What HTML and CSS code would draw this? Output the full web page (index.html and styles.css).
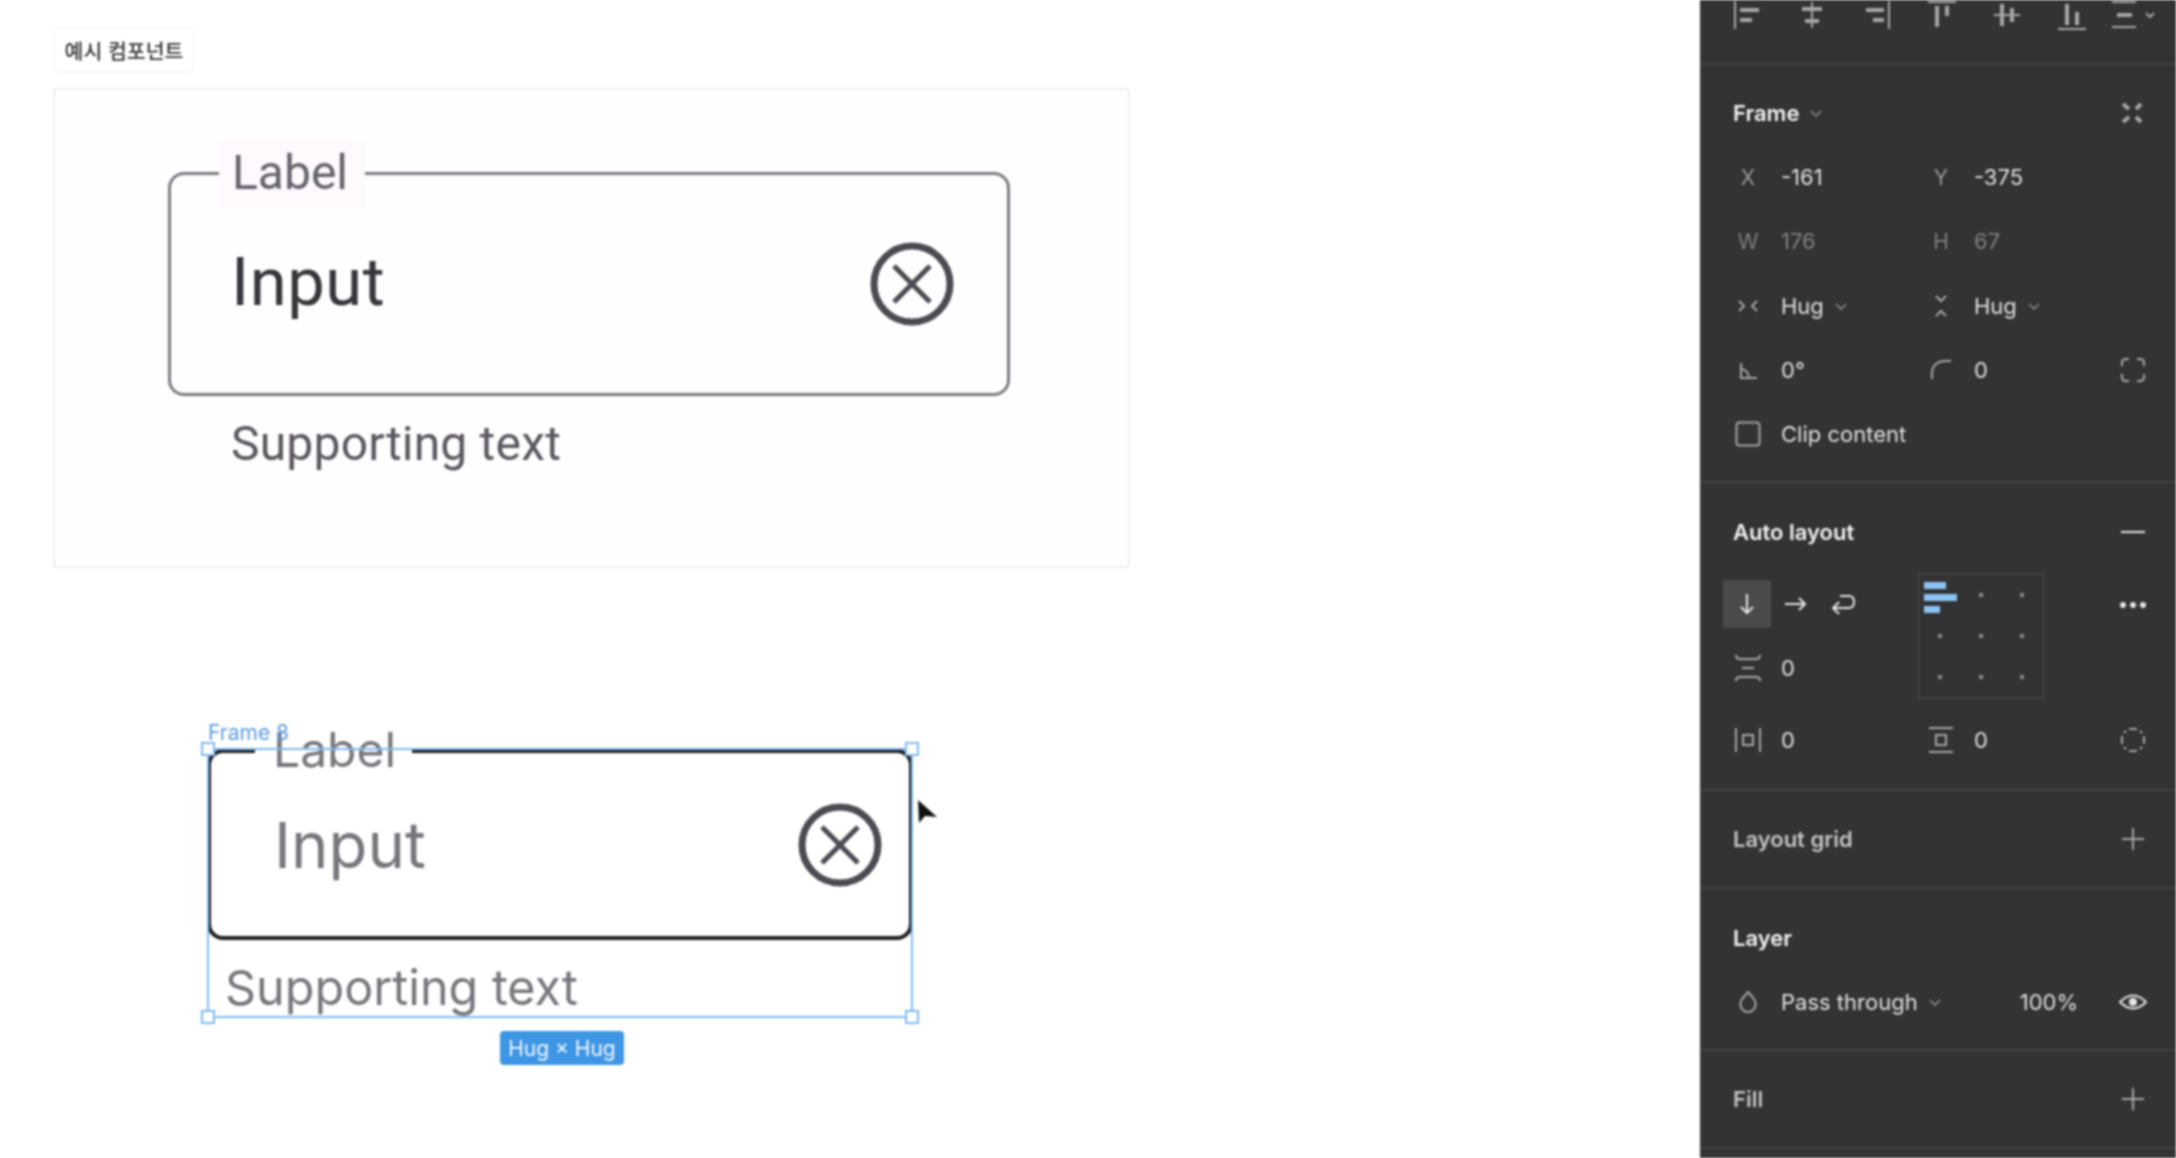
FILE: index.html

```html
<!DOCTYPE html>
<html lang="ko">
<head>
    <meta charset="UTF-8">
    <title>예시 컴포넌트</title>
    <link rel="stylesheet" href="styles.css">
</head>
<body>
<div class="app">
    <!-- canvas: frames sit at their own place on the free canvas -->
    <main class="canvas">
        <div class="tag">예시 컴포넌트</div>
        <div class="card"></div>

        <div class="field field-a">
            <div class="field-box">
                <span class="field-label">Label</span>
                <span class="field-input">Input</span>
                <svg class="clear-icon" viewBox="0 0 84 84"><circle cx="42" cy="42" r="38"/><path d="M24 24 60 60M60 24 24 60"/></svg>
            </div>
            <div class="field-support">Supporting text</div>
        </div>

        <div class="field field-b">
            <div class="field-box">
                <span class="field-label">Label</span>
                <span class="field-input">Input</span>
                <svg class="clear-icon" viewBox="0 0 84 84"><circle cx="42" cy="42" r="38"/><path d="M24 24 60 60M60 24 24 60"/></svg>
            </div>
            <div class="field-support">Supporting text</div>
            <div class="selection">
                <span class="frame-name">Frame 8</span>
                <i class="handle tl"></i><i class="handle tr"></i><i class="handle bl"></i><i class="handle br"></i>
                <span class="hug-badge">Hug × Hug</span>
            </div>
        </div>

        <svg class="cursor" viewBox="0 0 24 28"><path d="M2 1 3 24 9 17 21 18Z"/></svg>
    </main>

    <!-- right panel -->
    <aside class="panel">
        <section class="section align-bar">
            <svg class="ico" viewBox="0 0 30 30"><path d="M3 1V29"/><path class="thick" d="M8 10H27M8 20H20"/></svg>
            <svg class="ico" viewBox="0 0 30 30"><path d="M15 2V28"/><path class="thick" d="M5 9H25M8 21H22"/></svg>
            <svg class="ico" viewBox="0 0 30 30"><path d="M27 1V29"/><path class="thick" d="M4 10H22M11 20H22"/></svg>
            <svg class="ico" viewBox="0 0 30 30"><path d="M1 2H29"/><path class="thick" d="M10 6V27M20 6V16"/></svg>
            <svg class="ico" viewBox="0 0 30 30"><path d="M2 15H28"/><path class="thick" d="M10 4V26M20 8V22"/></svg>
            <svg class="ico" viewBox="0 0 30 30"><path d="M1 29H29"/><path class="thick" d="M10 4V25M20 12V25"/></svg>
            <svg class="ico ico-wide" viewBox="0 0 44 30"><path d="M2 2H26M2 27H26M36 13 40 17 44 13"/><path class="thick" d="M7 15H22"/></svg>
        </section>

        <section class="section section-frame">
            <div class="title-row">
                <span class="title">Frame <svg class="chev" viewBox="0 0 14 14"><path d="M2 4 7 9 12 4"/></svg></span>
                <svg class="ico" viewBox="0 0 30 30"><path class="thick" d="M5 6 11 11M23 6 18 11M5 24 11 19M23 24 18 19"/></svg>
            </div>
            <div class="row">
                <span class="pre">X</span><span class="val">-161</span>
                <span class="pre">Y</span><span class="val">-375</span>
            </div>
            <div class="row dim">
                <span class="pre">W</span><span class="val">176</span>
                <span class="pre">H</span><span class="val">67</span>
            </div>
            <div class="row row-hug">
                <svg class="ico" viewBox="0 0 30 30"><path d="M6 10 11 15 6 20M24 10 19 15 24 20"/></svg>
                <span class="val">Hug <svg class="chev" viewBox="0 0 14 14"><path d="M2 4 7 9 12 4"/></svg></span>
                <svg class="ico" viewBox="0 0 30 30"><path d="M10 5 15 10 20 5M10 25 15 20 20 25"/></svg>
                <span class="val">Hug <svg class="chev" viewBox="0 0 14 14"><path d="M2 4 7 9 12 4"/></svg></span>
            </div>
            <div class="row">
                <svg class="ico" viewBox="0 0 30 30"><path d="M8 8V23H24M8 14C12 14 16 18 16 23"/></svg>
                <span class="val">0°</span>
                <svg class="ico" viewBox="0 0 30 30"><path d="M6 24V18C6 10 12 6 20 6H25"/></svg>
                <span class="val">0</span>
                <svg class="ico" viewBox="0 0 30 30"><path d="M4 11V8Q4 4 8 4H11M19 4H22Q26 4 26 8V11M26 19V22Q26 26 22 26H19M11 26H8Q4 26 4 22V19"/></svg>
            </div>
            <div class="row">
                <svg class="ico" viewBox="0 0 30 30"><rect x="3.5" y="3.5" width="23" height="23" rx="3"/></svg>
                <span class="val val-wide">Clip content</span>
            </div>
        </section>

        <section class="section section-auto">
            <div class="title-row">
                <span class="title">Auto layout</span>
                <svg class="ico ico-bright" viewBox="0 0 30 30"><path d="M3 15H27"/></svg>
            </div>
            <div class="layout-top">
                <div class="layout-left">
                    <div class="dir-row">
                        <span class="dir-btn active"><svg class="ico ico-bright" viewBox="0 0 30 30"><path d="M15 5V24M9 18 15 24 21 18"/></svg></span>
                        <span class="dir-btn"><svg class="ico ico-bright" viewBox="0 0 30 30"><path d="M5 15H25M19 9 25 15 19 21"/></svg></span>
                        <span class="dir-btn"><svg class="ico ico-bright" viewBox="0 0 30 30"><path d="M12 7H21Q26 7 26 13T21 19H5M11 13 5 19 11 25"/></svg></span>
                    </div>
                    <div class="gap-row">
                        <svg class="ico" viewBox="0 0 30 30"><path d="M3 2Q3 6 7 6H23Q27 6 27 2M9 15H21M3 28Q3 24 7 24H23Q27 24 27 28"/></svg>
                        <span class="val">0</span>
                    </div>
                </div>
                <div class="align-grid">
                    <div class="align-cell first"><b class="bar-a"></b><b class="bar-b"></b><b class="bar-c"></b></div>
                    <div class="align-cell"><i></i></div>
                    <div class="align-cell"><i></i></div>
                    <div class="align-cell"><i></i></div>
                    <div class="align-cell"><i></i></div>
                    <div class="align-cell"><i></i></div>
                    <div class="align-cell"><i></i></div>
                    <div class="align-cell"><i></i></div>
                    <div class="align-cell"><i></i></div>
                </div>
                <svg class="ico ico-dots" viewBox="0 0 30 30"><circle cx="5" cy="15" r="3"/><circle cx="15" cy="15" r="3"/><circle cx="25" cy="15" r="3"/></svg>
            </div>
            <div class="row padding-row">
                <svg class="ico" viewBox="0 0 30 30"><path d="M3 3V27M27 3V27M10 10H20V20H10Z"/></svg>
                <span class="val">0</span>
                <svg class="ico" viewBox="0 0 30 30"><path d="M3 3H27M3 27H27M10 10H20V20H10Z"/></svg>
                <span class="val">0</span>
                <svg class="ico" viewBox="0 0 30 30"><path d="M4 11V19M26 11V19M11 4H19M11 26H19M6 8 8 6M22 6 24 8M24 22 22 24M8 24 6 22"/></svg>
            </div>
        </section>

        <section class="section section-plain">
            <span class="title title-dim">Layout grid</span>
            <svg class="ico" viewBox="0 0 30 30"><path d="M15 4V26M4 15H26"/></svg>
        </section>

        <section class="section">
            <div class="title-row"><span class="title">Layer</span></div>
            <div class="row">
                <svg class="ico" viewBox="0 0 30 30"><path d="M15 5 21 12C25 18 21 25 15 25S5 18 9 12Z"/></svg>
                <span class="val val-span">
                    <span>Pass through <svg class="chev" viewBox="0 0 14 14"><path d="M2 4 7 9 12 4"/></svg></span>
                    <span>100%</span>
                </span>
                <svg class="ico ico-bright" viewBox="0 0 30 30"><path d="M2 15Q15 2 28 15 15 28 2 15Z"/><circle class="pupil" cx="15" cy="15" r="4"/></svg>
            </div>
        </section>

        <section class="section section-plain">
            <span class="title title-dim">Fill</span>
            <svg class="ico" viewBox="0 0 30 30"><path d="M15 4V26M4 15H26"/></svg>
        </section>
    </aside>
</div>
</body>
</html>
```

FILE: styles.css

```css
html, body {
    margin: 0;
    height: 100%;
    overflow: hidden;
    background: #fff;
}
.app {
    display: flex;
    width: 2176px;
    height: 1158px;
    font-family: Inter, "Noto Sans CJK KR", sans-serif;
    filter: blur(0.8px);
}

/* canvas */
.canvas {
    position: relative;
    flex: 1;
    background: #fff;
}
.tag {
    position: absolute;
    left: 53px;
    top: 27px;
    width: 142px;
    height: 46px;
    box-sizing: border-box;
    display: flex;
    align-items: center;
    justify-content: center;
    border: 2px solid #f7f7f7;
    border-radius: 8px;
    font-family: "Noto Sans CJK KR", sans-serif;
    font-size: 20.5px;
    font-weight: 500;
    color: #333;
}
.card {
    position: absolute;
    left: 53px;
    top: 88px;
    width: 1077px;
    height: 480px;
    box-sizing: border-box;
    background: #fefefe;
    border: 2px solid #f0f0f0;
    border-radius: 4px;
}
.field {
    position: absolute;
}
.field-box {
    position: relative;
    display: flex;
    align-items: center;
    justify-content: space-between;
    box-sizing: border-box;
    border-radius: 16px;
}
.field-label {
    position: absolute;
    top: 0;
    transform: translateY(-50%);
    line-height: 1;
}
.field-input {
    line-height: 1;
}
.clear-icon {
    width: 84px;
    height: 84px;
    fill: none;
    stroke: #4c4b52;
    stroke-width: 7;
}
.clear-icon path {
    stroke-width: 5;
}

.field-a {
    left: 168px;
    top: 172px;
    width: 842px;
    font-family: Roboto, sans-serif;
}
.field-a .field-box {
    height: 224px;
    padding: 0 53px 0 60px;
    border: 3px solid #7c7a80;
}
.field-a .field-label {
    left: 48px;
    padding: 8px 17px 12px 13px;
    font-size: 48px;
    color: #67636d;
    background: #fdf9fd;
}
.field-a .field-input {
    margin-bottom: 4px;
    font-size: 67px;
    letter-spacing: 0.5px;
    color: #36363b;
}
.field-a .field-support {
    margin-top: 24px;
    padding-left: 63px;
    font-size: 48px;
    line-height: 48px;
    letter-spacing: 0.2px;
    color: #5a575f;
}

.field-b {
    left: 207px;
    top: 749px;
    width: 706px;
    font-family: Inter, sans-serif;
}
.field-b .field-box {
    height: 191px;
    padding: 0 27px 0 63px;
    border: 4px solid #1e1e20;
    background: #fff;
}
.field-b .field-label {
    left: 44px;
    top: -3px;
    padding: 0 16px 0 18px;
    font-size: 48px;
    color: #77767c;
    background: #fff;
}
.field-b .field-input {
    font-size: 63.5px;
    color: #77767c;
}
.field-b .field-support {
    margin-top: 24px;
    padding-left: 18px;
    font-size: 48.5px;
    line-height: 48px;
    color: #77767c;
}

.selection {
    position: absolute;
    left: 0;
    top: -1px;
    width: 706px;
    height: 270px;
    box-sizing: border-box;
    border: 2px solid #7fbaf0;
    pointer-events: none;
}
.frame-name {
    position: absolute;
    left: -1px;
    top: -29px;
    font-size: 21px;
    line-height: 24px;
    color: #5c9ce0;
}
.handle {
    position: absolute;
    width: 14px;
    height: 14px;
    box-sizing: border-box;
    background: #fff;
    border: 2px solid #7fbaf0;
}
.handle.tl { left: -8px; top: -8px; }
.handle.tr { right: -8px; top: -8px; }
.handle.bl { left: -8px; bottom: -8px; }
.handle.br { right: -8px; bottom: -8px; }
.hug-badge {
    position: absolute;
    left: 291px;
    top: 281px;
    width: 124px;
    height: 34px;
    display: flex;
    align-items: center;
    justify-content: center;
    background: #3f96e4;
    border-radius: 4px;
    color: #f2f7fc;
    font-size: 21px;
    white-space: nowrap;
}
.cursor {
    position: absolute;
    left: 916px;
    top: 799px;
    width: 24px;
    height: 28px;
    fill: #111;
}

/* panel */
.panel {
    flex: 0 0 476px;
    background: #333;
    color: #e6e6e6;
    font-size: 22px;
    overflow: hidden;
}
.section {
    box-sizing: border-box;
    padding: 17px 28px 15px 33px;
    border-bottom: 2px solid #434343;
}
.align-bar {
    display: flex;
    height: 65px;
    padding: 0 0 0 32px;
    column-gap: 35px;
}
.section-frame {
    padding-top: 16px;
}
.section-auto {
    padding-bottom: 17px;
}
.section-plain {
    display: flex;
    align-items: center;
    justify-content: space-between;
    height: 98px;
    padding-top: 0;
    padding-bottom: 0;
}
.title-row {
    display: flex;
    align-items: center;
    justify-content: space-between;
    height: 64px;
}
.title {
    font-size: 22px;
    font-weight: 600;
    color: #f2f2f2;
}
.title-dim {
    color: #c4c4c4;
}
.row {
    display: grid;
    grid-template-columns: 30px 127px 30px 126px 30px;
    column-gap: 18px;
    align-items: center;
    height: 64px;
}
.row-hug {
    margin-top: 1px;
}
.pre {
    text-align: center;
    font-size: 21px;
    color: #999;
}
.val {
    white-space: nowrap;
    color: #e0e0e0;
}
.dim .pre, .dim .val {
    color: #808080;
}
.val-wide {
    grid-column: 2 / 5;
}
.val-span {
    grid-column: 2 / 5;
    display: flex;
    justify-content: space-between;
    padding-right: 22px;
}
.val-span + .ico {
    grid-column: 5;
}
.ico {
    display: block;
    width: 30px;
    height: 30px;
    flex-shrink: 0;
    fill: none;
    stroke: #a6a6a6;
    stroke-width: 2;
}
.ico .thick {
    stroke-width: 4;
}
.ico-bright {
    stroke: #e6e6e6;
}
.ico-wide {
    width: 44px;
    margin-left: -12px;
}
.ico-dots {
    fill: #e6e6e6;
    stroke: none;
    margin-left: auto;
    align-self: flex-start;
    margin-top: 17px;
}
.pupil {
    fill: #e6e6e6;
    stroke: none;
}
.chev {
    display: inline-block;
    width: 14px;
    height: 14px;
    margin-left: 4px;
    fill: none;
    stroke: #888;
    stroke-width: 1.6;
}

/* auto layout */
.layout-top {
    display: flex;
    margin-top: 9px;
}
.layout-left {
    width: 185px;
}
.dir-row {
    display: flex;
    height: 62px;
    align-items: center;
    margin-left: -10px;
}
.dir-btn {
    display: flex;
    align-items: center;
    justify-content: center;
    width: 48px;
    height: 48px;
    border-radius: 3px;
}
.dir-btn.active {
    background: #4b4b4b;
}
.gap-row {
    display: flex;
    align-items: center;
    gap: 18px;
    height: 65px;
}
.align-grid {
    display: grid;
    grid-template-columns: repeat(3, 41px);
    grid-template-rows: repeat(3, 41px);
    width: 126px;
    height: 126px;
    box-sizing: border-box;
    border: 1px solid #484c52;
}
.align-cell {
    display: flex;
    align-items: center;
    justify-content: center;
}
.align-cell i {
    width: 4px;
    height: 4px;
    background: #888;
}
.align-cell.first {
    flex-direction: column;
    align-items: flex-start;
    gap: 5px;
    padding: 6px 0 0 5px;
}
.align-cell b {
    display: block;
    height: 7px;
    background: #8cc4f5;
}
.bar-a { width: 22px; }
.bar-b { width: 33px; }
.bar-c { width: 16px; }
.padding-row {
    margin-top: 8px;
}
```
